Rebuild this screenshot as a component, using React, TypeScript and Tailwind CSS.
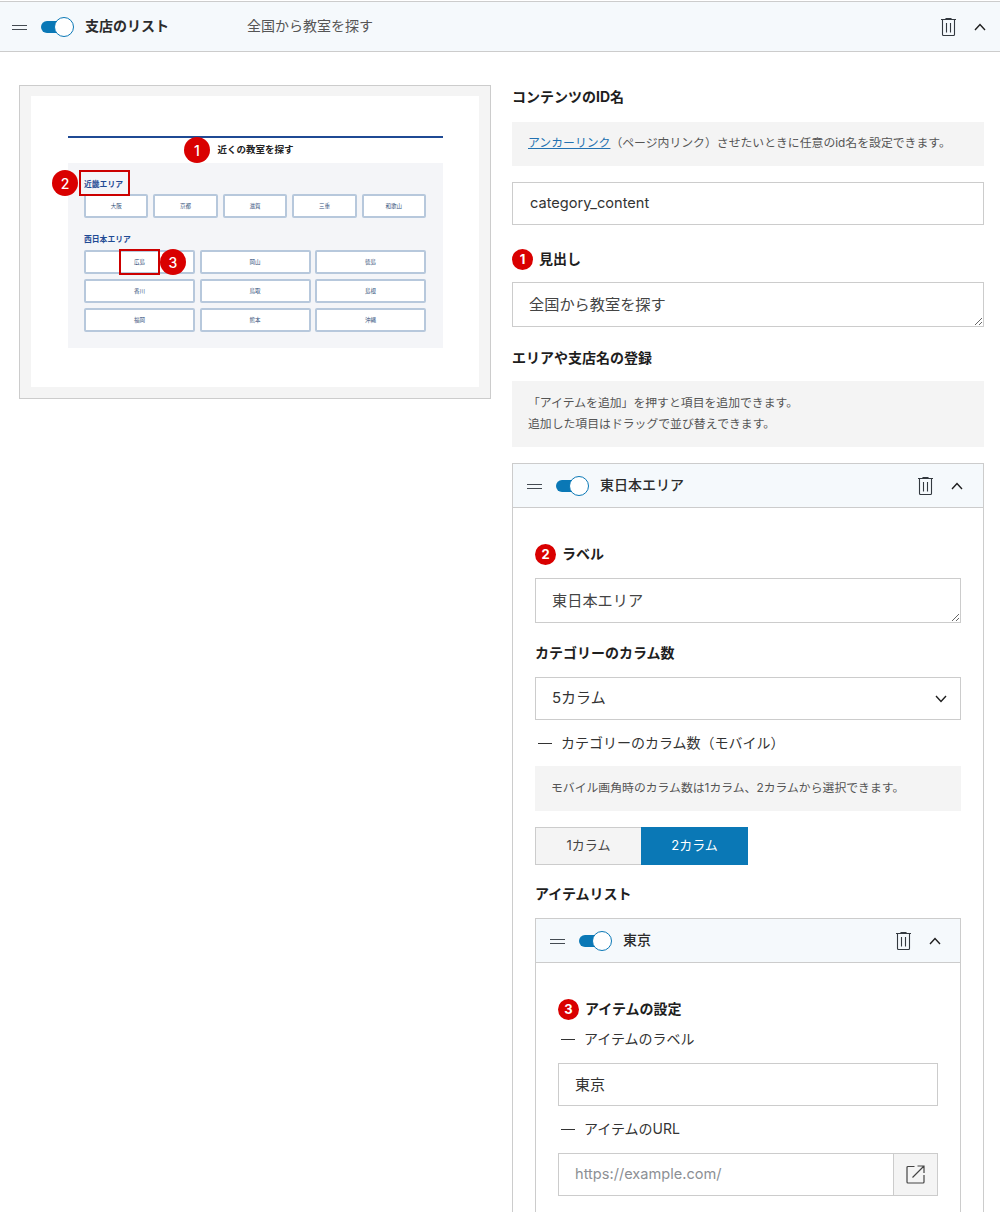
import React from 'react';

const font = { fontFamily: '"Inter", "Noto Sans CJK JP", sans-serif' };

const Grip = () => (
  <svg width="15" height="7" viewBox="0 0 15 7" className="shrink-0">
    <path d="M0 2.500h15M0 6.500h15" stroke="#444b52" strokeWidth="1" />
  </svg>
);

const Toggle = () => (
  <div className="relative w-[33px] h-[20px] shrink-0">
    <div className="absolute left-0 top-[4px] w-[28px] h-[12px] rounded-full bg-[#0a78b6]" />
    <div className="absolute right-0 top-0 w-[20px] h-[20px] rounded-full bg-white border border-[#0a78b6]" />
  </div>
);

const Trash = () => (
  <svg width="15" height="18" viewBox="0 0 15 18" fill="none" stroke="#33393f" strokeWidth="1.1">
    <path d="M0 1.500h15M5 1.500V.6h5v.9M1.500 1.500v15c0 .6.4 1 1 1h10c.6 0 1-.4 1-1v-15M5.500 5v9.500M9.500 5v9.500" />
  </svg>
);

const ChevronUp = () => (
  <svg width="12" height="8" viewBox="0 0 12 8" fill="none" stroke="#1e1e1e" strokeWidth="1.4">
    <path d="M1 7l5-5.4L11 7" />
  </svg>
);

const PanelHeader = ({ title, h, px, sub, weight }: { title: string; h: string; px: string; sub?: string; weight: string }) => (
  <div className={`flex items-center ${h} ${px} bg-[#f5f9fc]`}>
    <Grip />
    <div className="flex items-center gap-[11px] ml-[14px]">
      <Toggle />
      <span className={`text-[14px] pb-[2px] text-[#2c2c2c] whitespace-nowrap ${weight}`}>{title}</span>
    </div>
    {sub && <span className="ml-[78px] pb-[2px] text-[14px] text-[#555]">{sub}</span>}
    <div className="ml-auto flex items-center gap-[18px]">
      <Trash />
      <ChevronUp />
    </div>
  </div>
);

const Badge = ({ n }: { n: number }) => (
  <span className="w-[21px] h-[21px] rounded-full bg-[#d90000] text-white text-[13px] leading-none flex items-center justify-center shrink-0">{n}</span>
);

const Label = ({ children, n, className }: { children: React.ReactNode; n?: number; className: string }) => (
  <div className={`flex items-center gap-[6px] h-[24px] text-[14px] font-bold text-[#1e1e1e] ${className}`}>
    {n && <Badge n={n} />}
    <span className="pb-[1px]">{children}</span>
  </div>
);

const SubLabel = ({ children, className }: { children: React.ReactNode; className: string }) => (
  <div className={`flex items-center h-[24px] text-[14px] text-[#333] ${className}`}>
    <span className="w-[14px] h-px bg-[#333] ml-[3px] mr-[9px]" />
    <span className="pb-[1px]">{children}</span>
  </div>
);

const Note = ({ children, className }: { children: React.ReactNode; className: string }) => (
  <div className={`bg-[#f4f4f4] px-[16px] flex flex-col justify-center text-[11.85px] text-[#555] ${className}`}>{children}</div>
);

const Field = ({ value, className }: { value: string; className: string }) => (
  <input
    readOnly
    defaultValue={value}
    className={`block w-full h-[43px] border border-[#ccc] bg-white pl-[16px] pb-[2px] text-[#333] outline-none ${className}`}
  />
);

const Area = ({ value, className }: { value: string; className: string }) => (
  <textarea
    readOnly
    defaultValue={value}
    className={`block w-full h-[45px] border border-[#ccc] bg-white pl-[16px] pt-[12px] text-[15.2px] leading-[20px] text-[#444] outline-none ${className}`}
  />
);

const MiniBtn = ({ t }: { t: string }) => (
  <div className="h-[24px] rounded-[2px] border-2 border-[#b7c8dc] bg-white flex items-center justify-center text-[5.5px] text-[#33507a]">{t}</div>
);

const PreviewBadge = ({ n, className }: { n: number; className: string }) => (
  <span className={`absolute w-[26px] h-[26px] rounded-full bg-[#d90000] text-white text-[14px] font-medium flex items-center justify-center ${className}`}>{n}</span>
);

const Preview = () => (
  <div className="w-[472px] h-[314px] border border-[#ccc] bg-[#f4f4f4] pt-[10px] pl-[11px] pr-[11px] pb-[11px] shrink-0">
    <div className="relative h-[291px] bg-white pt-[40px] px-[37px]">
      <div className="bg-[#f4f5f8] h-[212px] w-[375px] border-t-2 border-[#1f4a94]">
        <div className="h-[25px] bg-white flex items-center justify-center text-[9.5px] font-bold text-[#222]">近くの教室を探す</div>
        <div className="pl-[16px] pr-[17px]">
          <div className="mt-[16px] h-[11px] text-[7.8px] leading-[11px] font-bold text-[#1f4a94]">近畿エリア</div>
          <div className="mt-[4px] grid grid-cols-5 gap-[5px]">
            {['大阪', '京都', '滋賀', '三重', '和歌山'].map(t => <MiniBtn key={t} t={t} />)}
          </div>
          <div className="mt-[16px] h-[11px] text-[7.8px] leading-[11px] font-bold text-[#1f4a94]">西日本エリア</div>
          <div className="mt-[5px] grid grid-cols-3 gap-x-[4.5px] gap-y-[5px]">
            {['広島', '岡山', '徳島', '香川', '鳥取', '島根', '福岡', '熊本', '沖縄'].map(t => <MiniBtn key={t} t={t} />)}
          </div>
        </div>
      </div>
      <PreviewBadge n={1} className="left-[153px] top-[41px]" />
      <PreviewBadge n={2} className="left-[21px] top-[74px]" />
      <PreviewBadge n={3} className="left-[129px] top-[153px]" />
      <div className="absolute left-[48px] top-[74px] w-[51px] h-[26px] border-2 border-[#cc0000]" />
      <div className="absolute left-[88px] top-[153px] w-[41px] h-[26px] border-2 border-[#cc0000]" />
    </div>
  </div>
);

export default function App() {
  return (
    <div className="w-[1000px] h-[1212px] overflow-hidden bg-white pt-px" style={font}>
      <div className="border-y border-[#ccc]">
        <PanelHeader title="支店のリスト" sub="全国から教室を探す" weight="font-bold" h="h-[49px]" px="pl-[12px] pr-[14px]" />
      </div>
      <div className="flex gap-[21px] pl-[19px] pt-[33px]">
        <Preview />
        <div className="w-[472px] shrink-0">
          <Label className="">コンテンツのID名</Label>
          <Note className="mt-[13px] h-[44px]">
            <div>
              <span className="text-[#2271b1] underline">アンカーリンク</span>（ページ内リンク）させたいときに任意のid名を設定できます。
            </div>
          </Note>
          <Field value="category_content" className="mt-[16px] text-[14.6px] pl-[17px]" />
          <Label n={1} className="mt-[22px]">見出し</Label>
          <Area value="全国から教室を探す" className="mt-[11px]" />
          <Label className="mt-[19px]">エリアや支店名の登録</Label>
          <Note className="mt-[11px] h-[66px] leading-[21px]">
            <div>「アイテムを追加」を押すと項目を追加できます。</div>
            <div>追加した項目はドラッグで並び替えできます。</div>
          </Note>

          <div className="mt-[16px] border border-[#ccc]">
            <div className="border-b border-[#ccc]">
              <PanelHeader title="東日本エリア" weight="font-medium" h="h-[43px]" px="pl-[14px] pr-[20px]" />
            </div>
            <div className="px-[22px] pt-[34px] pb-[40px]">
              <Label n={2} className="">ラベル</Label>
              <Area value="東日本エリア" className="mt-[12px]" />
              <Label className="mt-[18px]">カテゴリーのカラム数</Label>
              <div className="mt-[12px] h-[43px] border border-[#ccc] flex items-center justify-between pl-[16px] pr-[13px] text-[15px] text-[#333]">
                <span className="pb-[1px]">5カラム</span>
                <svg width="12" height="8" viewBox="0 0 12 8" fill="none" stroke="#1e1e1e" strokeWidth="1.4">
                  <path d="M1 1l5 5.4L11 1" />
                </svg>
              </div>
              <SubLabel className="mt-[11px]">カテゴリーのカラム数（モバイル）</SubLabel>
              <Note className="mt-[11px] h-[45px]">モバイル画角時のカラム数は1カラム、2カラムから選択できます。</Note>
              <div className="mt-[16px] flex h-[38px] text-[13px]">
                <div className="w-[106px] border border-[#ccc] border-r-0 bg-[#f4f4f4] text-[#444] flex items-center justify-center">1カラム</div>
                <div className="w-[107px] bg-[#0a78b6] text-white flex items-center justify-center">2カラム</div>
              </div>
              <Label className="mt-[17px]">アイテムリスト</Label>

              <div className="mt-[12px] border border-[#ccc]">
                <div className="border-b border-[#ccc]">
                  <PanelHeader title="東京" weight="font-medium" h="h-[43px]" px="pl-[14px] pr-[19px]" />
                </div>
                <div className="px-[22px] pt-[34px] pb-[40px]">
                  <Label n={3} className="">アイテムの設定</Label>
                  <SubLabel className="mt-[6px]">アイテムのラベル</SubLabel>
                  <Field value="東京" className="mt-[12px] text-[15px]" />
                  <SubLabel className="mt-[11px]">アイテムのURL</SubLabel>
                  <div className="mt-[12px] h-[43px] border border-[#ccc] flex">
                    <input
                      readOnly
                      placeholder="https://example.com/"
                      className="flex-1 min-w-0 pl-[16px] text-[14.6px] placeholder:text-[#8c8f94] outline-none"
                    />
                    <div className="w-[44px] border-l border-[#ccc] bg-[#f4f4f4] flex items-center justify-center">
                      <svg width="19" height="19" viewBox="0 0 19 19" fill="none" stroke="#444" strokeWidth="1.2">
                        <path d="M8.500 1.500H2a1 1 0 0 0-1 1v14.500a1 1 0 0 0 1 1h15a1 1 0 0 0 1-1V10M6.500 12.500L18 1M11.500 1H18v7" />
                      </svg>
                    </div>
                  </div>
                </div>
              </div>
            </div>
          </div>
        </div>
      </div>
    </div>
  );
}
